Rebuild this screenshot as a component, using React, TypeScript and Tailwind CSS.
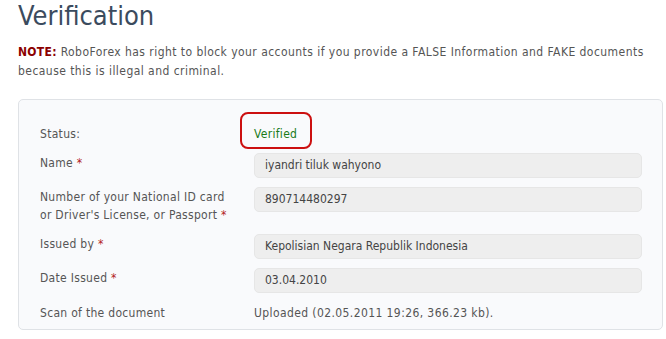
function Req() {
  return <span className="text-[#b22222]"> *</span>;
}

function Field({ value }: { value: string }) {
  return (
    <div className="h-[25px] w-[388px] rounded-[5px] border border-[#e6e6e6] bg-[#eeeeee] px-[10px] text-[12px] leading-[23px] tracking-normal text-[#444]">
      {value}
    </div>
  );
}

export default function App() {
  return (
    <div className="h-[339px] w-[666px] bg-white font-['DejaVu_Sans_Condensed','DejaVu_Sans',sans-serif] text-[#555]">
      <div className="px-[18px]">
        <h1 className="pt-[1px] text-[27px] leading-[30px] text-[#3b4b5e]">Verification</h1>
        <p className="mt-[12px] w-[640px] text-[12px] leading-[19px] tracking-[0.45px] text-[#555]">
          <span className="font-bold tracking-[0.3px] text-[#8b0000]">NOTE:</span> RoboForex has right to block your accounts if you provide a FALSE Information and FAKE documents because this is illegal and criminal.
        </p>
        <div className="mt-[18px] h-[231px] w-[645px] rounded-[5px] border border-[#dfe2e6] bg-[#f9fafc] pl-[21px] pt-[12px] text-[12px] tracking-[0.3px] text-[#555]">
          <div className="flex h-[27px] items-start pt-[16px] leading-[12px]">
            <div className="w-[214px]">Status:</div>
            <div className="relative text-[#1a7a1a]">
              Verified
              <span className="absolute left-[-14px] top-[-16px] h-[37px] w-[72px] rounded-[8px] border-2 border-[#cc1010]" />
            </div>
          </div>
          <div className="mt-[14px] flex items-start">
            <div className="w-[214px] pt-[3px] leading-[14px]">Name<Req /></div>
            <Field value="iyandri tiluk wahyono" />
          </div>
          <div className="mt-[9px] flex items-start">
            <div className="w-[214px] pt-[1px] leading-[18px]">
              Number of your National ID card
              <br />
              or Driver's License, or Passport<Req />
            </div>
            <Field value="890714480297" />
          </div>
          <div className="mt-[10px] flex items-start">
            <div className="w-[214px] pt-[3px] leading-[14px]">Issued by<Req /></div>
            <Field value="Kepolisian Negara Republik Indonesia" />
          </div>
          <div className="mt-[9px] flex items-start">
            <div className="w-[214px] pt-[3px] leading-[14px]">Date Issued<Req /></div>
            <Field value="03.04.2010" />
          </div>
          <div className="mt-[11px] flex items-center">
            <div className="w-[214px]">Scan of the document</div>
            <div className="tracking-[0.4px]">Uploaded (02.05.2011 19:26, 366.23 kb).</div>
          </div>
        </div>
      </div>
    </div>
  );
}
